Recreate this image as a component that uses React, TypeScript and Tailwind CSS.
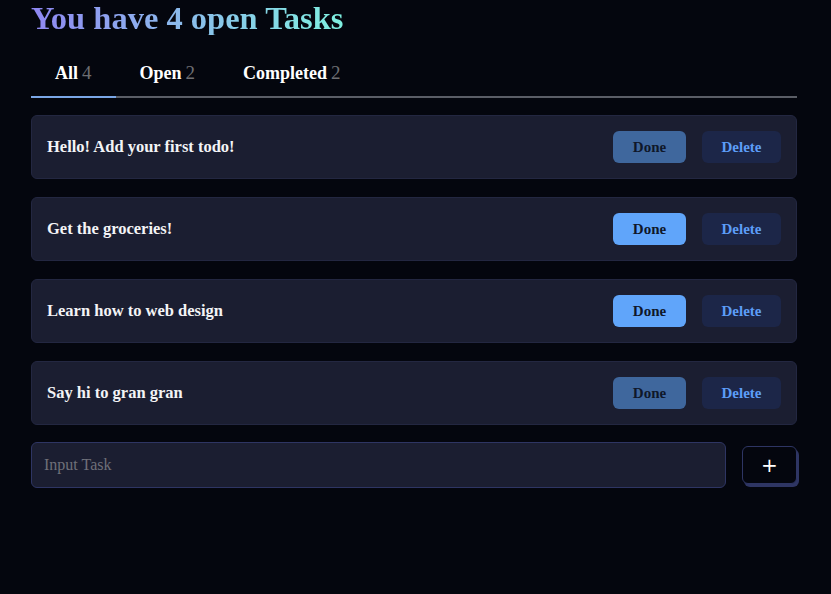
const todos = [
  { text: "Hello! Add your first todo!", done: true },
  { text: "Get the groceries!", done: false },
  { text: "Learn how to web design", done: false },
  { text: "Say hi to gran gran", done: true },
];

const tabs = [
  { label: "All", count: 4, active: true },
  { label: "Open", count: 2, active: false },
  { label: "Completed", count: 2, active: false },
];

export default function App() {
  return (
    <div className="min-h-[594px] w-full bg-[#04060e] font-['Liberation_Serif',serif]">
      <div className="ml-[31px] w-[766px] pb-10">
        <h1 className="pt-[1px] text-[32.5px] font-bold leading-[34px] bg-gradient-to-r from-[#8f86f2] to-[#7ef0e0] bg-clip-text text-transparent w-fit">
          You have 4 open Tasks
        </h1>

        <div className="mt-[27px] flex border-b-2 border-[#5a5d66]">
          {tabs.map((t) => (
            <div
              key={t.label}
              className={
                "-mb-[2px] px-[24px] pb-[12px] text-[18px] font-bold leading-[22px] text-white border-b-2 " +
                (t.active ? "border-[#7aa6e6]" : "border-transparent")
              }
            >
              {t.label}
              <span className="ml-[4px] text-[19px] font-normal text-[#6e6e72]">{t.count}</span>
            </div>
          ))}
        </div>

        <div className="mt-[17px] flex flex-col gap-[18px]">
          {todos.map((t) => (
            <div
              key={t.text}
              className="flex h-[64px] items-center rounded-[6px] border border-[#232741] bg-[#1b1e31] pl-[15px] pr-[15px]"
            >
              <span className="flex-1 text-[16.5px] font-bold text-[#f3f4f6]">{t.text}</span>
              <button
                className={
                  "h-[32px] w-[73px] rounded-[6px] text-[15px] font-bold text-[#0f172a] " +
                  (t.done ? "bg-[#3f679d]" : "bg-[#60a5fa]")
                }
              >
                Done
              </button>
              <button className="ml-4 h-[32px] w-[79px] rounded-[6px] bg-[#1c2648] text-[15px] font-bold text-[#5c9df7]">
                Delete
              </button>
            </div>
          ))}
        </div>

        <div className="mt-[17px] flex items-center">
          <input
            placeholder="Input Task"
            className="h-[46px] w-[695px] rounded-[6px] border border-[#2e3563] bg-[#1b1e31] px-3 text-[16px] text-white outline-none placeholder:text-[#6f7079]"
          />
          <button className="ml-auto flex h-[38px] w-[55px] items-center justify-center rounded-[6px] border border-[#2e3563] bg-[#04060e] text-[20px] leading-none text-white shadow-[2px_3px_0_#2e3563] font-['DejaVu_Sans',sans-serif]">
            +
          </button>
        </div>
      </div>
    </div>
  );
}
